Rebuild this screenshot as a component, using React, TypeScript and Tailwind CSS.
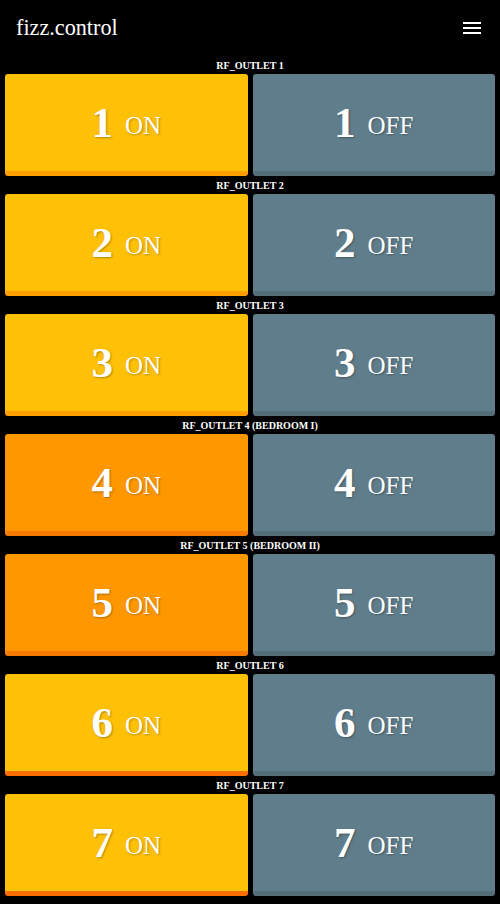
const outlets = [
  { n: 1, label: "RF_OUTLET 1", on: "bg-[#ffc107] border-[#ffa000]" },
  { n: 2, label: "RF_OUTLET 2", on: "bg-[#ffc107] border-[#ffa000]" },
  { n: 3, label: "RF_OUTLET 3", on: "bg-[#ffc107] border-[#ffa000]" },
  { n: 4, label: "RF_OUTLET 4 (BEDROOM I)", on: "bg-[#ff9800] border-[#f57c00]" },
  { n: 5, label: "RF_OUTLET 5 (BEDROOM II)", on: "bg-[#ff9800] border-[#f57c00]" },
  { n: 6, label: "RF_OUTLET 6", on: "bg-[#ffc107] border-[#ff6f00]" },
  { n: 7, label: "RF_OUTLET 7", on: "bg-[#ffc107] border-[#ff6f00]" },
];

function SwitchButton({ n, word, cls }: { n: number; word: string; cls: string }) {
  return (
    <button
      className={`h-[102px] rounded-[3px] border-b-[5px] flex items-center justify-center text-white [text-shadow:1px_1px_2px_rgba(0,0,0,0.3)] ${cls}`}
    >
      <span className="text-[43px] font-bold leading-none">{n}</span>
      <span className="ml-[12px] mt-[6px] text-[25px] leading-none">{word}</span>
    </button>
  );
}

export default function App() {
  return (
    <div className="min-h-[904px] bg-black text-white [font-family:'Liberation_Serif','Times_New_Roman',serif]">
      <header className="h-[56px] flex items-center justify-between pl-[16px] pr-[19px]">
        <h1 className="text-[22.2px]">fizz.control</h1>
        <div className="flex flex-col gap-[3px] w-[18px]">
          <span className="h-[2px] bg-white" />
          <span className="h-[2px] bg-white" />
          <span className="h-[2px] bg-white" />
        </div>
      </header>
      <main className="px-[5px]">
        {outlets.map((o) => (
          <section key={o.n}>
            <div className="h-[18px] pt-[1px] flex items-center justify-center text-[10px] font-bold">
              {o.label}
            </div>
            <div className="grid grid-cols-2 gap-[5px]">
              <SwitchButton n={o.n} word="ON" cls={o.on} />
              <SwitchButton n={o.n} word="OFF" cls="bg-[#607d8b] border-[#546e7a]" />
            </div>
          </section>
        ))}
      </main>
    </div>
  );
}
